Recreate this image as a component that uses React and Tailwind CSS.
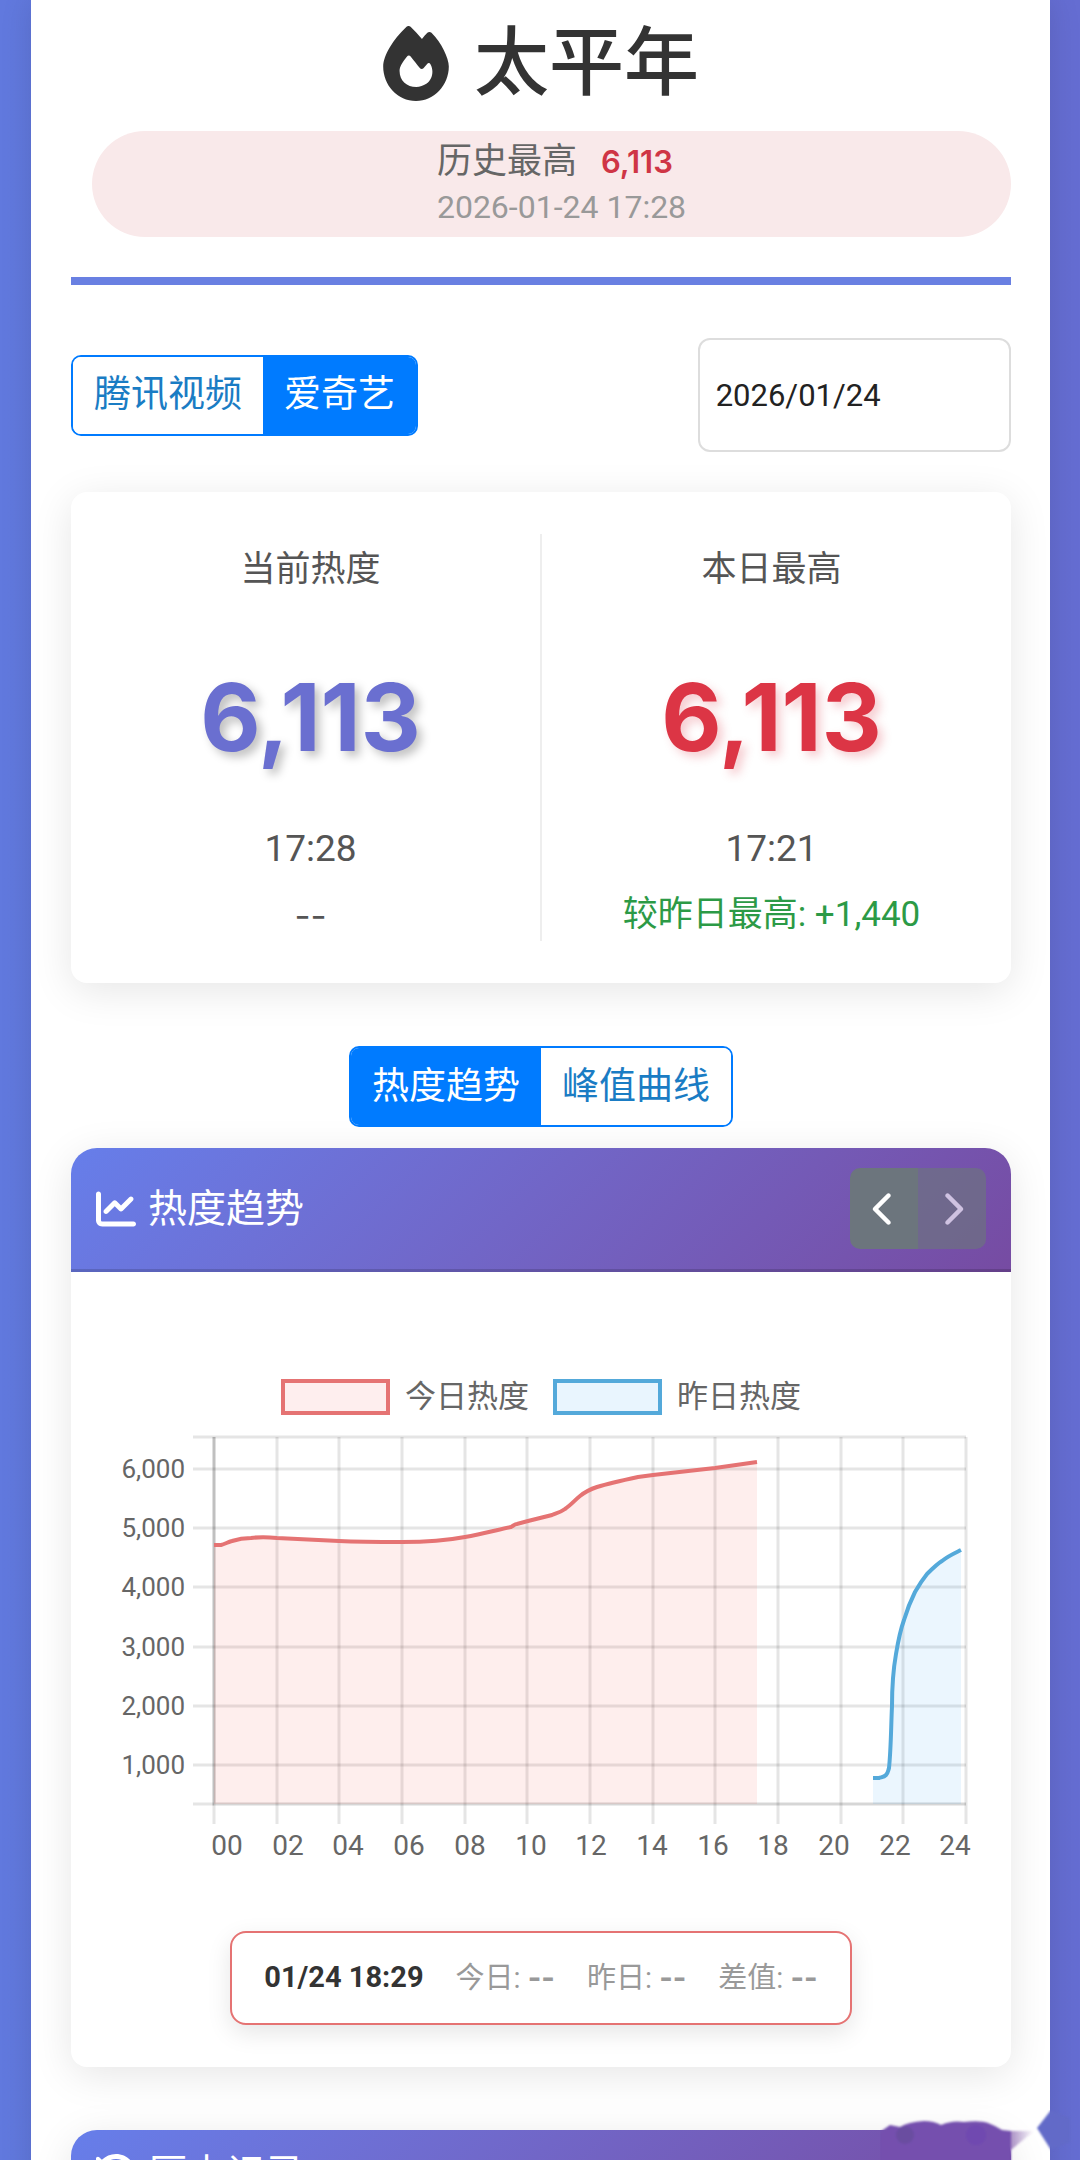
import { useState } from 'react';
import { FaFire, FaChartLine, FaChevronLeft, FaChevronRight, FaClockRotateLeft } from 'react-icons/fa6';

const yTicks = [
  { label: '6,000', y: 130 },
  { label: '5,000', y: 189 },
  { label: '4,000', y: 248 },
  { label: '3,000', y: 308 },
  { label: '2,000', y: 367 },
  { label: '1,000', y: 426 },
];

const hours = ['00', '02', '04', '06', '08', '10', '12', '14', '16', '18', '20', '22', '24'];

const todayPath =
  'M143 206 L150 206 C154 205 157 203 161 202 C167 200 173 199 180 199 C187 198 197 198 206 199 C227 200 247 201 268 202 C289 203 310 203 331 203 C352 203 373 202 394 198 C410 195 426 191 440 188 C442 187 444 185 446 185 L457 182 L481 176 C486 174 490 173 494 170 C500 166 504 161 509 157 C514 153 520 150 526 148 C539 144 553 141 567 138 L582 136 L626 131 L644 129 L686 123';

const yesterdayPath =
  'M802 439 L808 439 C811 438 813 438 815 436 C817 434 817 432 818 429 C820 410 820 388 821 367 C821 350 822 332 825 315 C827 303 829 292 833 281 C836 271 840 261 844 253 C848 246 852 240 856 235 C861 230 866 225 871 222 C877 217 884 214 890 211';

function ButtonGroup({ options, value, onChange }) {
  return (
    <div className="flex overflow-hidden rounded-[10px] border-2 border-[#007bff]">
      {options.map((option) => (
        <button
          key={option}
          type="button"
          onClick={() => onChange(option)}
          className={`h-[77px] px-[21px] text-[37px] ${
            value === option ? 'bg-[#007bff] text-white' : 'bg-white text-[#1a7cc4]'
          }`}
        >
          {option}
        </button>
      ))}
    </div>
  );
}

function Stat({ label, value, time, diff, valueClass, diffClass }) {
  return (
    <div className="flex flex-1 flex-col items-center">
      <p className="mt-[10px] text-[35px] leading-[52px] text-[#555]">{label}</p>
      <p className={`mt-[58px] font-[family-name:Inter,sans-serif] text-[93px] leading-[126px] font-bold ${valueClass}`}>
        {value}
      </p>
      <p className="mt-[43px] text-[37px] leading-[52px] text-[#555]">{time}</p>
      <p className={`mt-[14px] text-[35px] leading-[52px] ${diffClass}`}>{diff}</p>
    </div>
  );
}

function CardHeader({ icon, title, children }) {
  return (
    <div className="flex items-center justify-between rounded-t-[26px] border-b-3 border-black/15 bg-linear-135 from-[#667eea] to-[#764ba2] bg-origin-border px-[25px] py-5 text-white">
      <h2 className="flex items-center gap-3 text-[39px] leading-[48px]">
        {icon}
        {title}
      </h2>
      {children}
    </div>
  );
}

function LegendItem({ label, boxClass }) {
  return (
    <li className="flex items-center gap-[15px] text-[31px] leading-[43px] text-[#666]">
      <span className={`h-[36px] w-[109px] border-4 ${boxClass}`} />
      {label}
    </li>
  );
}

function TooltipValue({ label, value }) {
  return (
    <span>
      {label}: <b className="font-[family-name:Inter,sans-serif]">{value}</b>
    </span>
  );
}

function TrendChart() {
  return (
    <svg viewBox="0 0 940 540" className="block w-full" role="img" aria-label="热度趋势">
      <g stroke="#000" strokeOpacity="0.1" strokeWidth="3">
        <path d="M122 98H895" />
        {yTicks.map((t) => (
          <path key={t.label} d={`M122 ${t.y}H895`} />
        ))}
        <path d="M122 465H143" />
        {hours.map((h, i) => (
          <path key={h} d={`M${Math.round(143 + i * 62.67)} 98V485`} />
        ))}
        <path d="M143 98V465H895" fill="none" strokeOpacity="0.16" />
      </g>
      <path d={`${todayPath} V465 H143 Z`} fill="#f44336" fillOpacity="0.09" />
      <path d={`${yesterdayPath} V465 H802 Z`} fill="#2196f3" fillOpacity="0.09" />
      <path d={todayPath} fill="none" stroke="#e57373" strokeWidth="4" />
      <path d={yesterdayPath} fill="none" stroke="#54a9da" strokeWidth="4" />
      <g fill="#666" fontSize="26" textAnchor="end">
        {yTicks.map((t) => (
          <text key={t.label} x="114" y={t.y + 9}>
            {t.label}
          </text>
        ))}
      </g>
      <g fill="#666" fontSize="28" textAnchor="middle">
        {hours.map((h, i) => (
          <text key={h} x={Math.round(156 + i * 60.7)} y="516">
            {h}
          </text>
        ))}
      </g>
    </svg>
  );
}

export default function App() {
  const [platform, setPlatform] = useState('爱奇艺');
  const [view, setView] = useState('热度趋势');
  const [date, setDate] = useState('2026/01/24');

  return (
    <div className="relative h-screen overflow-hidden bg-linear-to-r from-[#6179de] to-[#656dd2] pr-[30px] pl-[31px] font-[family-name:Roboto,'Noto_Sans_CJK_SC',sans-serif]">
      <main className="min-h-screen bg-white pt-[26px] pr-[39px] pl-10 shadow-[0_0_30px_rgba(0,0,0,0.12)]">
        <header className="border-b-8 border-[#6980e2] pb-10">
          <h1 className="flex h-[75px] items-center justify-center gap-[25px] text-[75px] leading-[75px] font-medium text-[#333]">
            <FaFire className="h-[75px] w-[66px]" />
            太平年
          </h1>
          <div className="mt-[30px] ml-[21px] flex justify-center rounded-full bg-[#f9e9ea] py-2 pl-5">
            <div>
              <p className="flex items-center gap-6 text-[35px] leading-[46px] text-[#666]">
                历史最高 <strong className="font-[family-name:Inter,sans-serif] text-[31px] font-semibold text-[#cf3545]">6,113</strong>
              </p>
              <p className="text-[32px] leading-[44px] text-[#999]">2026-01-24 17:28</p>
            </div>
          </div>
        </header>

        <div className="mt-[53px] flex items-center justify-between">
          <ButtonGroup options={['腾讯视频', '爱奇艺']} value={platform} onChange={setPlatform} />
          <input
            type="text"
            aria-label="日期"
            value={date}
            onChange={(e) => setDate(e.target.value)}
            className="h-[114px] w-1/3 rounded-xl border-2 border-[#ddd] bg-white px-4 text-[31px] text-[#222]"
          />
        </div>

        <section className="mt-10 flex rounded-2xl bg-white px-[10px] py-[42px] shadow-[0_8px_40px_rgba(0,0,0,0.1)]">
          <Stat
            label="当前热度"
            value="6,113"
            time="17:28"
            diff="--"
            valueClass="text-[#6a6fd0] [text-shadow:5px_5px_10px_rgba(0,0,0,0.25)]"
            diffClass="font-[family-name:Inter,sans-serif] text-[#555]"
          />
          <div className="w-[2px] bg-[#eee]" />
          <Stat
            label="本日最高"
            value="6,113"
            time="17:21"
            diff="较昨日最高: +1,440"
            valueClass="text-[#dc3545] [text-shadow:5px_5px_10px_rgba(220,53,69,0.25)]"
            diffClass="text-[#2c9a46]"
          />
        </section>

        <div className="mt-[63px] flex justify-center">
          <ButtonGroup options={['热度趋势', '峰值曲线']} value={view} onChange={setView} />
        </div>

        <section className="mt-[21px] rounded-t-[26px] rounded-b-2xl bg-white pb-[42px] shadow-[0_8px_40px_rgba(0,0,0,0.1)]">
          <CardHeader icon={<FaChartLine className="size-10" />} title="热度趋势">
            <div className="flex overflow-hidden rounded-[10px] text-[36px]">
              <button type="button" aria-label="前一天" className="flex h-[81px] w-[68px] items-center justify-center bg-[#6c757d]">
                <FaChevronLeft />
              </button>
              <button type="button" aria-label="后一天" disabled className="flex h-[81px] w-[68px] items-center justify-center bg-[#6c757d] opacity-65">
                <FaChevronRight />
              </button>
            </div>
          </CardHeader>
          <div className="pt-[103px]">
            <ul className="-mb-[79px] flex justify-center gap-6">
              <LegendItem label="今日热度" boxClass="border-[#e57373] bg-[#feeeee]" />
              <LegendItem label="昨日热度" boxClass="border-[#54a9da] bg-[#e9f5fe]" />
            </ul>
            <TrendChart />
          </div>
          <div className="mt-[52px] flex justify-center">
            <div className="flex h-[94px] items-center gap-8 rounded-2xl border-2 border-[#e57373] bg-white px-8 text-[29px] text-[#999] shadow-[0_8px_24px_rgba(0,0,0,0.1)]">
              <span className="font-bold text-[#333]">01/24 18:29</span>
              <TooltipValue label="今日" value="--" />
              <TooltipValue label="昨日" value="--" />
              <TooltipValue label="差值" value="--" />
            </div>
          </div>
        </section>

        <section className="mt-[63px] rounded-t-[26px] bg-white shadow-[0_8px_40px_rgba(0,0,0,0.1)]">
          <CardHeader icon={<FaClockRotateLeft className="size-10" />} title="历史记录" />
        </section>
      </main>

      <svg viewBox="0 0 200 50" className="absolute right-0 bottom-0 h-[50px] w-[200px]" aria-hidden="true">
        <defs>
          <filter id="soft">
            <feGaussianBlur stdDeviation="1" />
          </filter>
          <linearGradient id="fade">
            <stop offset="0" stopColor="#764ba2" stopOpacity="0.6" />
            <stop offset="1" stopColor="#764ba2" stopOpacity="0" />
          </linearGradient>
        </defs>
        <g filter="url(#soft)">
          <path d="M0 22 L10 15 L20 17 Q28 12 44 11 Q54 11 61 15 Q72 10 84 12 Q100 10 108 13 Q116 16 122 20 L131 21 L131 52 L0 52 Z" fill="#7450ae" />
          <path d="M131 21 L154 21 L131 40 Z" fill="url(#fade)" />
          <circle cx="25" cy="25" r="9" fill="#6a4da0" />
          <circle cx="96" cy="25" r="10" fill="#6f48b0" />
          <path d="M171 0 L157 18 L171 40 L190 32 L190 8 Z" fill="#626ac8" />
        </g>
      </svg>
    </div>
  );
}
